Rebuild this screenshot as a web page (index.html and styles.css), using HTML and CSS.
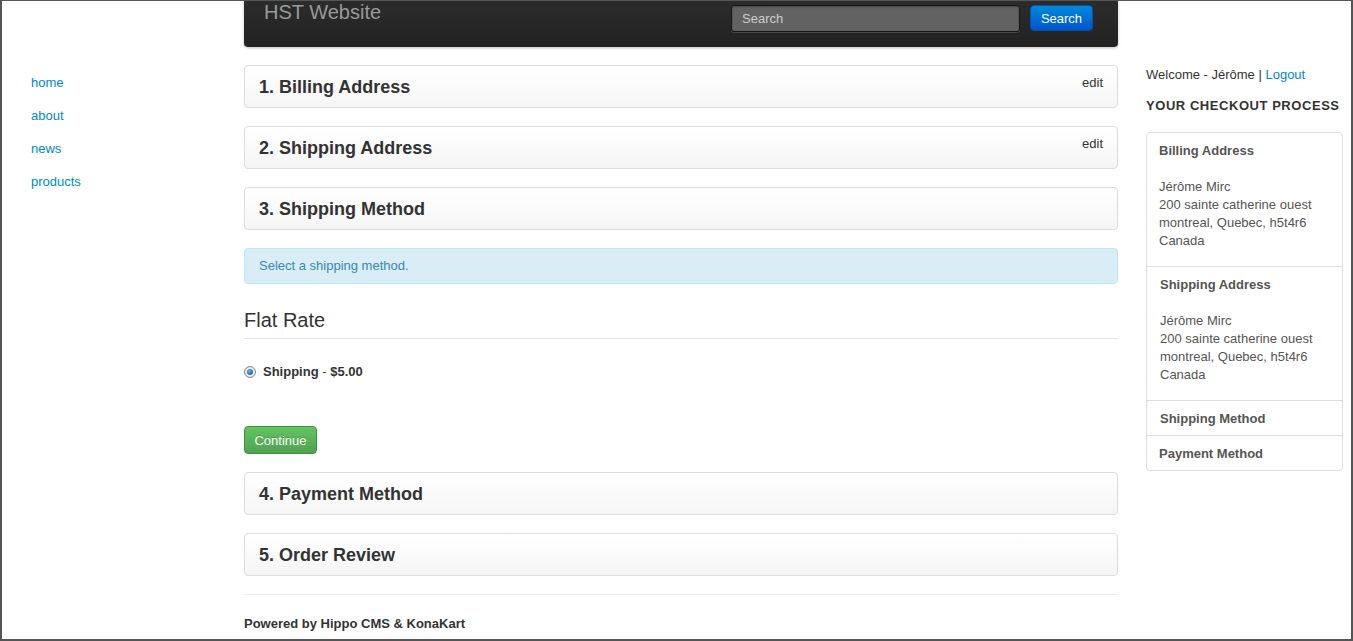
FILE: index.html
```html
<!DOCTYPE html>
<html>
<head>
<meta charset="utf-8">
<title>HST Website - Checkout</title>
<link rel="stylesheet" href="styles.css">
</head>
<body>
<div class="frame">
  <nav class="sidenav">
    <a href="#">home</a>
    <a href="#">about</a>
    <a href="#">news</a>
    <a href="#">products</a>
  </nav>

  <main class="main">
    <header class="navbar">
      <div class="brand">HST Website</div>
      <form class="search">
        <input class="search-input" type="text" placeholder="Search">
        <button class="btn-search" type="button">Search</button>
      </form>
    </header>

    <section class="panel"><h2 class="panel-title">1. Billing Address</h2><a class="edit" href="#">edit</a></section>
    <section class="panel"><h2 class="panel-title">2. Shipping Address</h2><a class="edit" href="#">edit</a></section>
    <section class="panel"><h2 class="panel-title">3. Shipping Method</h2></section>

    <div class="alert">Select a shipping method.</div>

    <h3 class="rate-title">Flat Rate</h3>
    <div class="rate-option">
      <span class="radio"><span class="radio-dot"></span></span>
      <span class="rate-label"><b>Shipping</b> - <b>$5.00</b></span>
    </div>

    <button class="btn-continue" type="button">Continue</button>

    <section class="panel"><h2 class="panel-title">4. Payment Method</h2></section>
    <section class="panel"><h2 class="panel-title">5. Order Review</h2></section>

    <footer class="footer">Powered by Hippo CMS &amp; KonaKart</footer>
  </main>

  <aside class="sidebar">
    <div class="welcome">Welcome - Jérôme | <a href="#">Logout</a></div>
    <div class="process-title">YOUR CHECKOUT PROCESS</div>
    <div class="process">
      <div class="step">
        <div class="step-title">Billing Address</div>
        <div class="address">Jérôme Mirc<br>200 sainte catherine ouest<br>montreal, Quebec, h5t4r6<br>Canada</div>
      </div>
      <div class="step step-shift">
        <div class="step-title">Shipping Address</div>
        <div class="address">Jérôme Mirc<br>200 sainte catherine ouest<br>montreal, Quebec, h5t4r6<br>Canada</div>
      </div>
      <div class="step step-short step-shift"><div class="step-title">Shipping Method</div></div>
      <div class="step step-short"><div class="step-title">Payment Method</div></div>
    </div>
  </aside>
</div>
</body>
</html>
```

FILE: styles.css
```css
* { box-sizing: border-box; }
html, body { margin: 0; padding: 0; }
body {
  font-family: "Liberation Sans", Arial, sans-serif;
  font-size: 13px;
  line-height: 18px;
  color: #333;
  background: #fff;
}
a { color: #0088cc; text-decoration: none; }

.frame {
  width: 1353px;
  height: 641px;
  border-top: 1px solid #555;
  border-left: 2px solid #555;
  border-right: 2px solid #555;
  border-bottom: 2px solid #555;
  display: flex;
  align-items: flex-start;
  overflow: hidden;
}

.sidenav {
  width: 242px;
  flex: none;
  padding: 73px 0 0 29px;
  display: flex;
  flex-direction: column;
  gap: 15px;
}
.sidenav a { display: block; line-height: 18px; }

.main {
  width: 874px;
  flex: none;
  margin-top: -1px;
}

.navbar {
  height: 47px;
  background: linear-gradient(#2c2c2c, #222);
  border-radius: 0 0 4px 4px;
  box-shadow: 0 1px 3px rgba(0,0,0,0.25);
  display: flex;
  justify-content: space-between;
  align-items: flex-start;
  padding: 0 25px 0 20px;
  margin-bottom: 18px;
}
.brand {
  color: #999;
  font-size: 20px;
  line-height: 24px;
}
.search { display: flex; gap: 10px; padding-top: 5px; }
.search-input {
  width: 289px;
  height: 27px;
  background: #626262;
  border: 1px solid #151515;
  border-radius: 3px;
  box-shadow: inset 0 1px 2px rgba(0,0,0,0.3), 0 1px 0 rgba(255,255,255,0.15);
  color: #ccc;
  font-family: "Liberation Sans", Arial, sans-serif;
  font-size: 13px;
  padding: 0 10px;
  outline: none;
}
.search-input::placeholder { color: #ccc; }
.btn-search {
  width: 63px;
  height: 26px;
  border: 1px solid #0055aa;
  border-radius: 4px;
  background: linear-gradient(#0088dd, #0055cc);
  color: #fff;
  font-family: "Liberation Sans", Arial, sans-serif;
  font-size: 13px;
  padding: 0;
}

.panel {
  height: 43px;
  border: 1px solid #ddd;
  border-radius: 4px;
  background: linear-gradient(#fff, #f5f5f5);
  display: flex;
  justify-content: space-between;
  align-items: flex-start;
  padding: 0 14px;
  margin-bottom: 18px;
}
.panel-title {
  margin: 0;
  padding-top: 2px;
  font-size: 18px;
  font-weight: bold;
  line-height: 39px;
  color: #333;
}
.edit {
  color: #333;
  font-size: 13px;
  line-height: 18px;
  padding-top: 8px;
}

.alert {
  background: #d9edf7;
  border: 1px solid #bce8f1;
  border-radius: 4px;
  color: #3a87ad;
  padding: 8px 35px 8px 14px;
  margin-bottom: 18px;
}

.rate-title {
  margin: 0;
  font-size: 20px;
  font-weight: normal;
  line-height: 36px;
  border-bottom: 1px solid #e5e5e5;
  color: #333;
}

.rate-option {
  display: flex;
  align-items: center;
  gap: 7px;
  margin-top: 24px;
  height: 18px;
}
.radio {
  width: 12px;
  height: 12px;
  border-radius: 50%;
  border: 1px solid #888;
  background: radial-gradient(#fff, #ddd);
  display: flex;
  align-items: center;
  justify-content: center;
}
.radio-dot {
  width: 6px;
  height: 6px;
  border-radius: 50%;
  background: radial-gradient(circle at 40% 35%, #5ab0f0, #0b4c8c);
}
.rate-label { font-size: 13px; color: #444; }
.rate-label b { color: #333; }

.btn-continue {
  display: block;
  margin-top: 45px;
  margin-bottom: 18px;
  width: 73px;
  height: 28px;
  border: 1px solid #3b923b;
  border-radius: 4px;
  background: linear-gradient(#62c462, #51a351);
  color: #fff;
  font-family: "Liberation Sans", Arial, sans-serif;
  font-size: 13px;
  padding: 0;
  text-shadow: 0 -1px 0 rgba(0,0,0,0.2);
}

.footer {
  border-top: 1px solid #eee;
  padding-top: 20px;
  font-weight: bold;
  color: #333;
}

.sidebar {
  width: 197px;
  flex: none;
  margin-left: 28px;
  padding-top: 64px;
}
.welcome { line-height: 20px; }
.process-title {
  font-weight: bold;
  margin-top: 12px;
  white-space: nowrap;
  letter-spacing: 0.55px;
}
.process {
  margin-top: 17px;
  border: 1px solid #ddd;
  border-radius: 4px;
}
.step {
  padding: 9px 12px 16px;
  border-top: 1px solid #ddd;
  color: #555;
}
.step:first-child { border-top: none; }
.step-shift { padding-left: 13px; }
.step-short { padding-top: 9px; padding-bottom: 7px; }
.step-title { font-weight: bold; color: #555; }
.address { margin-top: 18px; color: #555; }
```
